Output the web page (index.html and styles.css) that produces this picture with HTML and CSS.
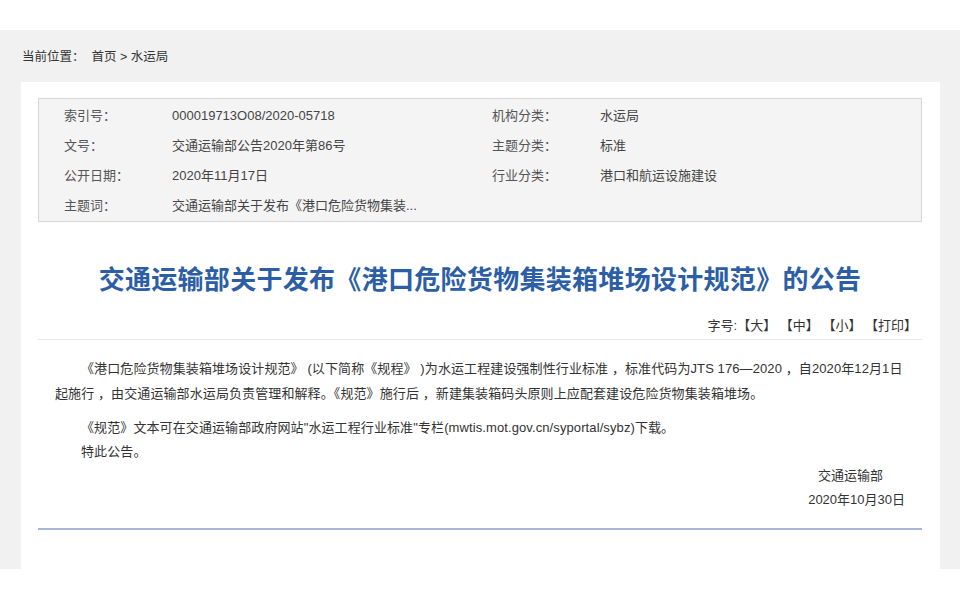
FILE: index.html
```html
<!DOCTYPE html>
<html lang="zh-CN">
<head>
<meta charset="utf-8">
<title>交通运输部关于发布《港口危险货物集装箱堆场设计规范》的公告</title>
<link rel="stylesheet" href="styles.css">
</head>
<body>
<div class="topbar"></div>
<div class="main">
  <div class="crumb">当前位置：<span class="crumb-links">首页 &gt; 水运局</span></div>
  <div class="card">
    <div class="info">
      <div class="info-row"><span class="lab">索引号：</span><span class="val">000019713O08/2020-05718</span></div>
      <div class="info-row"><span class="lab">机构分类：</span><span class="val">水运局</span></div>
      <div class="info-row"><span class="lab">文号：</span><span class="val">交通运输部公告2020年第86号</span></div>
      <div class="info-row"><span class="lab">主题分类：</span><span class="val">标准</span></div>
      <div class="info-row"><span class="lab">公开日期：</span><span class="val">2020年11月17日</span></div>
      <div class="info-row"><span class="lab">行业分类：</span><span class="val">港口和航运设施建设</span></div>
      <div class="info-row"><span class="lab">主题词：</span><span class="val">交通运输部关于发布《港口危险货物集装...</span></div>
    </div>
    <h1 class="title">交通运输部关于发布《港口危险货物集装箱堆场设计规范》的公告</h1>
    <div class="fontsize">字号:【大】 【中】 【小】 【打印】</div>
    <div class="content">
      <p class="p1">《港口危险货物集装箱堆场设计规范》 (以下简称《规程》 )为水运工程建设强制性行业标准 ，标准代码为JTS 176—2020 ，自2020年12月1日起施行 ，由交通运输部水运局负责管理和解释。《规范》施行后 ，新建集装箱码头原则上应配套建设危险货物集装箱堆场。</p>
      <p class="p2">《规范》文本可在交通运输部政府网站"水运工程行业标准"专栏(mwtis.mot.gov.cn/syportal/sybz)下载。</p>
      <p class="p3">特此公告。</p>
      <div class="sign">
        <div class="sign-org">交通运输部</div>
        <div class="sign-date">2020年10月30日</div>
      </div>
    </div>
    <div class="endline"></div>
  </div>
</div>
</body>
</html>
```
FILE: styles.css
```css
* { box-sizing: border-box; }
html, body { margin: 0; padding: 0; }
body {
  background: #fff;
  font-family: "Liberation Sans", "Noto Sans CJK SC", sans-serif;
  color: #333;
  width: 960px;
  height: 600px;
  overflow: hidden;
}
.topbar { height: 30px; background: #fff; }
.main {
  background: #f1f1f1;
  padding: 0 20px 0 21px;
  height: 539px;
}
.crumb {
  height: 52px;
  line-height: 54px;
  font-size: 12.5px;
  color: #333;
  padding-left: 1px;
}
.crumb-links { margin-left: 7px; }
.card {
  background: #fff;
  height: 487px;
  padding: 16px 18px 0 17px;
}
.info {
  background: #f4f4f4;
  border: 1px solid #d6d6d6;
  height: 124px;
  padding: 2px 0 0 25px;
  display: grid;
  grid-template-columns: 428px 1fr;
  grid-auto-rows: 30px;
}
.info-row {
  display: flex;
  font-size: 13px;
  line-height: 30px;
  white-space: nowrap;
}
.lab { width: 108px; color: #555; flex: none; }
.val { color: #444; }
.title {
  margin: 36px 0 0;
  font-family: "Noto Sans CJK SC", sans-serif;
  font-size: 26px;
  line-height: 40px;
  font-weight: bold;
  color: #2c5ea6;
  text-align: center;
  letter-spacing: 0.3px;
}
.fontsize {
  margin-top: 18px;
  font-size: 13px;
  line-height: 20px;
  text-align: right;
  padding: 0 5px 3px 0;
  border-bottom: 1px solid #e6e6e6;
  color: #333;
}
.content {
  padding: 16px 15px 0 17px;
  font-size: 13px;
  color: #333;
}
.content p { margin: 0; text-indent: 2em; letter-spacing: 0.1px; }
.p1 { line-height: 25px; }
.p2 { line-height: 24px; margin-top: 10px !important; }
.p3 { line-height: 24px; }
.sign { text-align: right; line-height: 24px; padding-right: 2px; }
.sign-org { padding-right: 22px; }
.endline {
  margin-top: 16px;
  height: 2px;
  background: #aab7da;
}
```
